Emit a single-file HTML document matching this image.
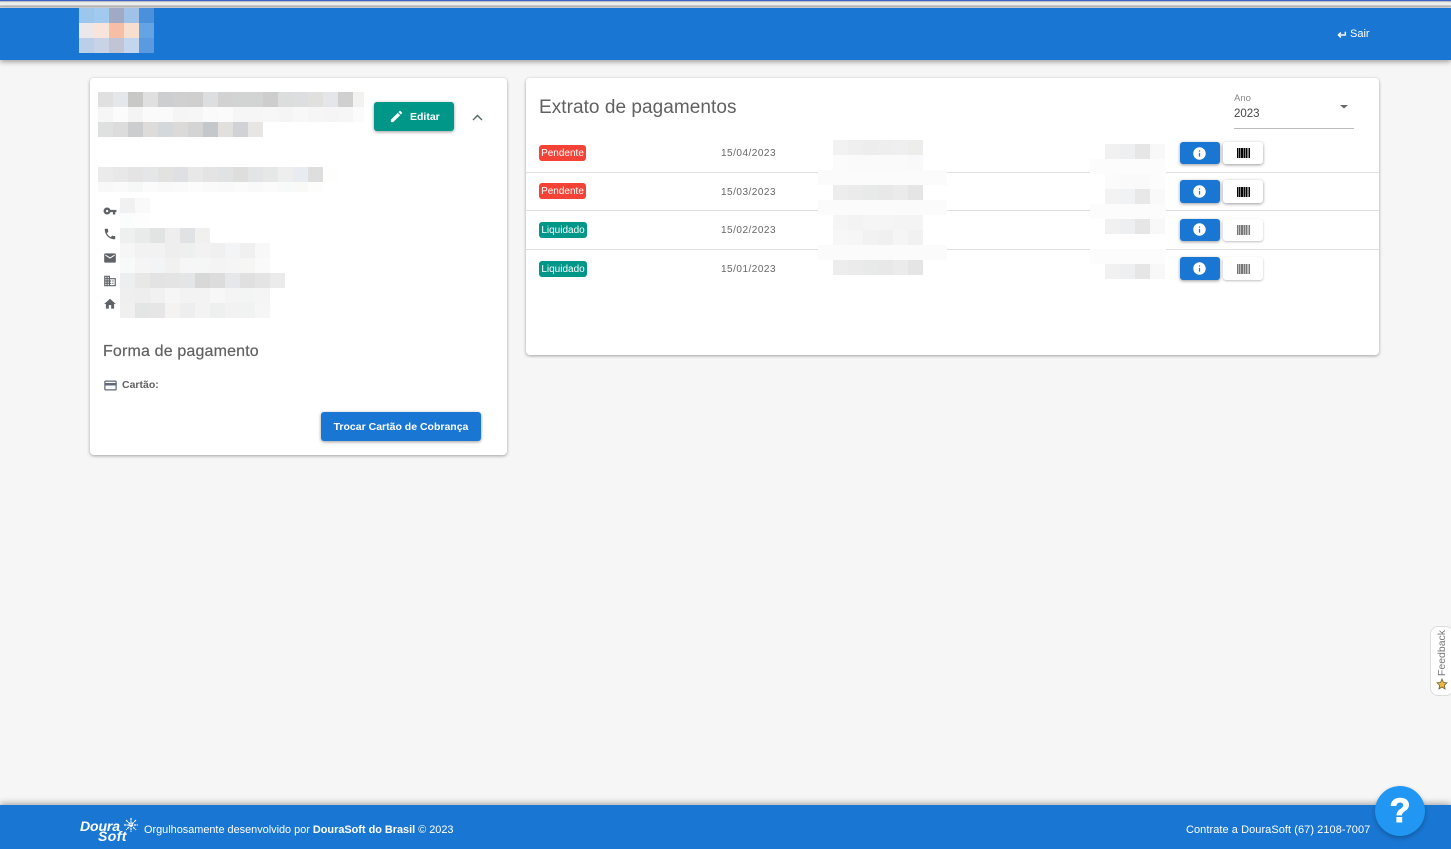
<!DOCTYPE html>
<html lang="pt-BR">
<head>
<meta charset="utf-8">
<title>Extrato de pagamentos</title>
<style>
html,body{margin:0;padding:0;width:1451px;height:849px;overflow:hidden;background:#f6f6f6;font-family:"Liberation Sans",sans-serif;}
.a{position:absolute;white-space:nowrap;}
#strip{left:0;top:0;width:1451px;height:8px;background:linear-gradient(#3a62c4 0,#3a62c4 1px,#a4a8b8 1px,#d8d8d8 2px,#f0f0f0 3px,#eeeeee 5px,#a8a8a8 6px,#c8c8c8 7px,#e4e4e4 8px);}
#head{left:0;top:8px;width:1451px;height:52px;background:#1976d2;box-shadow:0 2px 5px rgba(0,0,0,.35);}
#foot{left:0;top:805px;width:1451px;height:44px;background:#1976d2;box-shadow:0 -2px 6px rgba(0,0,0,.3);}
.card{background:#fff;border-radius:4px;box-shadow:0 1px 3px rgba(0,0,0,.35);}
svg#m{position:absolute;left:0;top:0;width:1451px;height:849px;shape-rendering:crispEdges;pointer-events:none;}
svg#m rect{width:15px;height:15px;}
.btn{border-radius:3px;box-shadow:0 1px 3px rgba(0,0,0,.4);}
.line{left:526px;width:853px;height:1px;background:#e0e0e0;}
.badge{left:539px;height:16px;line-height:18px;border-radius:3px;color:#fff;font-size:10px;text-align:center;}
.date{left:721px;font-size:10px;color:#666;letter-spacing:.5px;line-height:12px;}
.ic{position:absolute;display:block;}
</style>
</head>
<body>
<div class="a" id="strip"></div>
<div class="a" id="head"></div>
<div class="a" id="foot"></div>
<div class="a card" style="left:90px;top:78px;width:417px;height:377px;"></div>
<div class="a card" style="left:526px;top:78px;width:853px;height:277px;"></div>

<div class="a line" style="top:172px;"></div>
<div class="a line" style="top:210px;"></div>
<div class="a line" style="top:249px;"></div>

<svg id="m" viewBox="0 0 1451 849">
<g transform="translate(79,8)">
<rect x="0" y="0" fill="#9cc6ec"/><rect x="15" y="0" fill="#a2caee"/><rect x="30" y="0" fill="#a0aac4"/><rect x="45" y="0" fill="#a0c2e6"/><rect x="60" y="0" fill="#4a90dc"/>
<rect x="0" y="15" fill="#ece8ea"/><rect x="15" y="15" fill="#f8e4da"/><rect x="30" y="15" fill="#f6bea4"/><rect x="45" y="15" fill="#f8dece"/><rect x="60" y="15" fill="#64a4e4"/>
<rect x="0" y="30" fill="#bccfe8"/><rect x="15" y="30" fill="#c8d4e6"/><rect x="30" y="30" fill="#c0c4d4"/><rect x="45" y="30" fill="#c4d6ee"/><rect x="60" y="30" fill="#5a9ae0"/>
</g>
<g transform="translate(98,92)">
<rect x="0" y="0" fill="#e0e0e0"/><rect x="15" y="0" fill="#e4e8ea"/><rect x="30" y="0" fill="#c8c8c6"/><rect x="45" y="0" fill="#e0e0e0"/><rect x="60" y="0" fill="#cdced0"/><rect x="75" y="0" fill="#d0d0d0"/><rect x="90" y="0" fill="#cfcfcf"/><rect x="105" y="0" fill="#dcdee0"/><rect x="120" y="0" fill="#d2d2d2"/><rect x="135" y="0" fill="#d2d3d3"/><rect x="150" y="0" fill="#d2d3d3"/><rect x="165" y="0" fill="#cdcdcd"/><rect x="180" y="0" fill="#dcdedd"/><rect x="195" y="0" fill="#dcdee0"/><rect x="210" y="0" fill="#e0e0de"/><rect x="225" y="0" fill="#e4e6ea"/><rect x="240" y="0" fill="#d0d0d0"/><rect x="255" y="0" fill="#f2f2f0" style="width:11px"/>
<rect x="0" y="15" fill="#f6f6f6"/><rect x="15" y="15" fill="#fbfbfb"/><rect x="30" y="15" fill="#f4f4f4"/><rect x="45" y="15" fill="#fafafa"/><rect x="60" y="15" fill="#fafafa"/><rect x="75" y="15" fill="#f5f5f5"/><rect x="90" y="15" fill="#f6f6f6"/><rect x="105" y="15" fill="#fafafa"/><rect x="120" y="15" fill="#fafbfa"/><rect x="135" y="15" fill="#f6f6f6"/><rect x="150" y="15" fill="#f6f6f6"/><rect x="165" y="15" fill="#f7f7f7"/><rect x="180" y="15" fill="#f5f5f5"/><rect x="195" y="15" fill="#f8f8f8"/><rect x="210" y="15" fill="#f6f6f6"/><rect x="225" y="15" fill="#f5f5f5"/><rect x="240" y="15" fill="#f6f6f6"/><rect x="255" y="15" fill="#fbfbfb" style="width:11px"/>
<rect x="0" y="30" fill="#dfe1e1"/><rect x="15" y="30" fill="#dcdcdc"/><rect x="30" y="30" fill="#cbcdce"/><rect x="45" y="30" fill="#dedcda"/><rect x="60" y="30" fill="#d4d8da"/><rect x="75" y="30" fill="#dcdad8"/><rect x="90" y="30" fill="#d4d4d4"/><rect x="105" y="30" fill="#c4c8ca"/><rect x="120" y="30" fill="#e2e0de"/><rect x="135" y="30" fill="#d0d2d6"/><rect x="150" y="30" fill="#e8e6e4"/>
</g>
<g transform="translate(98,167)">
<rect x="0" y="0" fill="#ebebeb"/><rect x="15" y="0" fill="#e8e8e8"/><rect x="30" y="0" fill="#e4e4e4"/><rect x="45" y="0" fill="#e4e6e8"/><rect x="60" y="0" fill="#e2e2e0"/><rect x="75" y="0" fill="#dfe0e4"/><rect x="90" y="0" fill="#e8e8e8"/><rect x="105" y="0" fill="#e4e4e4"/><rect x="120" y="0" fill="#e0e2e4"/><rect x="135" y="0" fill="#dededc"/><rect x="150" y="0" fill="#e2e4e6"/><rect x="165" y="0" fill="#e6e8e8"/><rect x="180" y="0" fill="#eeeeee"/><rect x="195" y="0" fill="#e8ecf0"/><rect x="210" y="0" fill="#dedede"/><rect x="225" y="0" fill="#fefefc"/>
<rect x="0" y="15" fill="#f8f8f8" style="height:10px"/><rect x="15" y="15" fill="#fafafa" style="height:10px"/><rect x="30" y="15" fill="#f6f8f8" style="height:10px"/><rect x="45" y="15" fill="#fbfbfb" style="height:10px"/><rect x="60" y="15" fill="#f9f9f9" style="height:10px"/><rect x="75" y="15" fill="#fafafa" style="height:10px"/><rect x="90" y="15" fill="#fbfcfb" style="height:10px"/><rect x="105" y="15" fill="#fafafa" style="height:10px"/><rect x="120" y="15" fill="#f9f9f9" style="height:10px"/><rect x="135" y="15" fill="#fbfbfb" style="height:10px"/><rect x="150" y="15" fill="#f9f9f9" style="height:10px"/><rect x="165" y="15" fill="#fbfbfb" style="height:10px"/><rect x="180" y="15" fill="#f8f9f9" style="height:10px"/><rect x="195" y="15" fill="#f9f9f8" style="height:10px"/><rect x="210" y="15" fill="#fdfdfc" style="height:10px"/>
</g>
<g transform="translate(120,198)">
<rect x="0" y="0" fill="#f1f1f1"/><rect x="15" y="0" fill="#f9f9f9"/>
<rect x="0" y="15" fill="#fbfcfc"/><rect x="15" y="15" fill="#fdfdfd"/>
<rect x="0" y="30" fill="#eeefef"/><rect x="15" y="30" fill="#e9eaea"/><rect x="30" y="30" fill="#e2e3e3"/><rect x="45" y="30" fill="#eeeeee"/><rect x="60" y="30" fill="#e1e2e4"/><rect x="75" y="30" fill="#f0f0ee"/>
<rect x="0" y="45" fill="#f6f6f6"/><rect x="15" y="45" fill="#f2f2f2"/><rect x="30" y="45" fill="#f2f2f2"/><rect x="45" y="45" fill="#eeeeee"/><rect x="60" y="45" fill="#eef0f0"/><rect x="75" y="45" fill="#f2f2f2"/><rect x="90" y="45" fill="#f0f0f0"/><rect x="105" y="45" fill="#f3f4f6"/><rect x="120" y="45" fill="#f0f0f0"/><rect x="135" y="45" fill="#f8f8f8"/>
<rect x="0" y="60" fill="#f8f9f9"/><rect x="15" y="60" fill="#f5f5f5"/><rect x="30" y="60" fill="#f2f4f6"/><rect x="45" y="60" fill="#f1f1ef"/><rect x="60" y="60" fill="#f6f6f6"/><rect x="75" y="60" fill="#f5f6f6"/><rect x="90" y="60" fill="#f4f4f4"/><rect x="105" y="60" fill="#f5f5f5"/><rect x="120" y="60" fill="#f6f6f4"/><rect x="135" y="60" fill="#fafafa"/>
<rect x="0" y="75" fill="#eceef0"/><rect x="15" y="75" fill="#e8e8e6"/><rect x="30" y="75" fill="#e3e3e3"/><rect x="45" y="75" fill="#e4e4e4"/><rect x="60" y="75" fill="#e4e5e6"/><rect x="75" y="75" fill="#d8d8d8"/><rect x="90" y="75" fill="#dcdcdc"/><rect x="105" y="75" fill="#e6e7ea"/><rect x="120" y="75" fill="#e0e0e0"/><rect x="135" y="75" fill="#e4e4e4"/><rect x="150" y="75" fill="#ebebeb"/>
<rect x="0" y="90" fill="#efeff0"/><rect x="15" y="90" fill="#eeeeee"/><rect x="30" y="90" fill="#f1f1f1"/><rect x="45" y="90" fill="#f6f6f6"/><rect x="60" y="90" fill="#f3f3f3"/><rect x="75" y="90" fill="#f3f3f3"/><rect x="90" y="90" fill="#f7f7f7"/><rect x="105" y="90" fill="#f4f4f4"/><rect x="120" y="90" fill="#f3f4f4"/><rect x="135" y="90" fill="#f5f5f5"/>
<rect x="0" y="105" fill="#f0f0f0"/><rect x="15" y="105" fill="#e4e5e5"/><rect x="30" y="105" fill="#e6e6e6"/><rect x="45" y="105" fill="#f4f3f1"/><rect x="60" y="105" fill="#eeeeee"/><rect x="75" y="105" fill="#f3f3f3"/><rect x="90" y="105" fill="#eef0f0"/><rect x="105" y="105" fill="#f2f2f2"/><rect x="120" y="105" fill="#f1f2f2"/><rect x="135" y="105" fill="#f6f6f6"/>
</g>
<!-- table col 1 -->
<rect x="818" y="170" fill="#fbfbfb" style="width:129px"/>
<rect x="818" y="200" fill="#fbfbfb" style="width:129px"/>
<rect x="818" y="245" fill="#fbfbfb" style="width:129px"/>
<g transform="translate(833,140)">
<rect x="0" y="0" fill="#f2f2f2"/><rect x="15" y="0" fill="#efefef"/><rect x="30" y="0" fill="#ededed"/><rect x="45" y="0" fill="#eeeeee"/><rect x="60" y="0" fill="#efefef"/><rect x="75" y="0" fill="#ededeb"/>
<rect x="0" y="15" fill="#fbfbfb"/><rect x="15" y="15" fill="#fafafa"/><rect x="30" y="15" fill="#fafafa"/><rect x="45" y="15" fill="#fafafa"/><rect x="60" y="15" fill="#fafafa"/><rect x="75" y="15" fill="#f9f9f9"/>
<rect x="0" y="45" fill="#ededed"/><rect x="15" y="45" fill="#ebebeb"/><rect x="30" y="45" fill="#e8eaea"/><rect x="45" y="45" fill="#e9e8e8"/><rect x="60" y="45" fill="#ebebeb"/><rect x="75" y="45" fill="#e5e5e5"/>
<rect x="0" y="75" fill="#f5f5f5"/><rect x="15" y="75" fill="#f3f3f3"/><rect x="30" y="75" fill="#f5f5f5"/><rect x="45" y="75" fill="#f5f5f5"/><rect x="60" y="75" fill="#f4f4f4"/><rect x="75" y="75" fill="#f4f4f4"/>
<rect x="0" y="90" fill="#f7f7f7"/><rect x="15" y="90" fill="#f6f6f6"/><rect x="30" y="90" fill="#f2f2f2"/><rect x="45" y="90" fill="#f0f0f0"/><rect x="60" y="90" fill="#f5f5f5"/><rect x="75" y="90" fill="#f1f1f1"/>
<rect x="0" y="120" fill="#ededed"/><rect x="15" y="120" fill="#ebebeb"/><rect x="30" y="120" fill="#e8eaea"/><rect x="45" y="120" fill="#e9e8e8"/><rect x="60" y="120" fill="#ebebeb"/><rect x="75" y="120" fill="#e5e5e5"/>
</g>
<!-- table col 2 -->
<rect x="1090" y="159" fill="#fcfcfc" style="width:76px"/>
<rect x="1090" y="204" fill="#fcfcfc" style="width:76px"/>
<rect x="1090" y="249" fill="#fcfcfc" style="width:76px"/>
<g transform="translate(1105,144)">
<rect x="0" y="0" fill="#f1f1f1"/><rect x="15" y="0" fill="#eeeff0"/><rect x="30" y="0" fill="#e6e6e6"/><rect x="45" y="0" fill="#f8f8f8"/>
<rect x="0" y="30" fill="#fbfbfb"/><rect x="15" y="30" fill="#fafafa"/><rect x="30" y="30" fill="#fafafa"/><rect x="45" y="30" fill="#fcfcfc"/>
<rect x="0" y="45" fill="#f3f3f3"/><rect x="15" y="45" fill="#f1f2f3"/><rect x="30" y="45" fill="#e8e8e8"/><rect x="45" y="45" fill="#f9f9f9"/>
<rect x="0" y="75" fill="#f1f1f1"/><rect x="15" y="75" fill="#eeeff0"/><rect x="30" y="75" fill="#e6e6e6"/><rect x="45" y="75" fill="#f8f8f8"/>
<rect x="0" y="120" fill="#f1f1f1"/><rect x="15" y="120" fill="#eeeff0"/><rect x="30" y="120" fill="#e6e6e6"/><rect x="45" y="120" fill="#f8f8f8"/>
</g>
</svg>

<!-- Header right -->
<svg class="ic" style="left:1337px;top:30px" width="10" height="10" viewBox="0 0 24 24"><path fill="#fff" stroke="#fff" stroke-width="1.500" d="M19 5v6H5.830l3.580-3.590L8 6l-6 6 6 6 1.410-1.410L5.830 13H21V5z"/></svg>
<div class="a" style="left:1350px;top:28px;font-size:11px;line-height:13px;color:#fff;">Sair</div>

<!-- Edit -->
<div class="a btn" style="left:374px;top:102px;width:80px;height:29px;background:#009688;"></div>
<svg class="ic" style="left:389px;top:109px" width="15" height="15" viewBox="0 0 24 24"><path fill="#fff" d="M3 17.25V21h3.75L17.81 9.94l-3.75-3.75L3 17.25zM20.71 7.04c.39-.39.39-1.02 0-1.41l-2.34-2.34c-.39-.39-1.02-.39-1.41 0l-1.83 1.83 3.75 3.75 1.83-1.83z"/></svg>
<div class="a" style="left:410px;top:110px;font-size:10.500px;line-height:14px;font-weight:bold;color:#fff;">Editar</div>
<svg class="ic" style="left:470px;top:110px" width="15" height="14" viewBox="0 0 15 14"><path fill="none" stroke="#566" stroke-width="1.400" d="M3 10l4.500-4.500L12 10"/></svg>

<!-- Contact icons -->
<svg class="ic" style="left:103px;top:204px" width="14" height="14" viewBox="0 0 24 24"><path fill="#5f6368" d="M12.65 10C11.83 7.670 9.610 6 7 6c-3.310 0-6 2.690-6 6s2.690 6 6 6c2.610 0 4.830-1.670 5.650-4H17v4h4v-4h2v-4H12.650zM7 14c-1.100 0-2-.9-2-2s.9-2 2-2 2 .9 2 2-.9 2-2 2z"/></svg>
<svg class="ic" style="left:103px;top:227px" width="14" height="14" viewBox="0 0 24 24"><path fill="#5f6368" d="M6.620 10.790c1.440 2.830 3.760 5.140 6.590 6.590l2.200-2.200c.27-.27.67-.36 1.020-.24 1.120.37 2.330.57 3.570.57.55 0 1 .45 1 1V20c0 .55-.45 1-1 1-9.390 0-17-7.610-17-17 0-.55.45-1 1-1h3.500c.55 0 1 .45 1 1 0 1.250.2 2.450.57 3.570.11.35.03.74-.25 1.020l-2.200 2.200z"/></svg>
<svg class="ic" style="left:103px;top:251px" width="14" height="14" viewBox="0 0 24 24"><path fill="#5f6368" d="M20 4H4c-1.100 0-1.990.9-1.990 2L2 18c0 1.100.9 2 2 2h16c1.100 0 2-.9 2-2V6c0-1.100-.9-2-2-2zm0 4l-8 5-8-5V6l8 5 8-5v2z"/></svg>
<svg class="ic" style="left:103px;top:274px" width="14" height="14" viewBox="0 0 24 24"><path fill="#5f6368" d="M12 7V3H2v18h20V7H12zM6 19H4v-2h2v2zm0-4H4v-2h2v2zm0-4H4V9h2v2zm0-4H4V5h2v2zm4 12H8v-2h2v2zm0-4H8v-2h2v2zm0-4H8V9h2v2zm0-4H8V5h2v2zm10 12h-8v-2h2v-2h-2v-2h2v-2h-2V9h8v10zm-2-8h-2v2h2v-2zm0 4h-2v2h2v-2z"/></svg>
<svg class="ic" style="left:103px;top:297px" width="14" height="14" viewBox="0 0 24 24"><path fill="#5f6368" d="M10 20v-6h4v6h5v-8h3L12 3 2 12h3v8z"/></svg>

<div class="a" style="left:103px;top:342px;font-size:16px;line-height:19px;color:#616161;letter-spacing:.16px;-webkit-text-stroke:.2px #616161;">Forma de pagamento</div>
<svg class="ic" style="left:103px;top:378px" width="15" height="15" viewBox="0 0 24 24"><path fill="#5f6b7a" d="M20 4H4c-1.110 0-1.990.89-1.990 2L2 18c0 1.110.89 2 2 2h16c1.110 0 2-.89 2-2V6c0-1.110-.89-2-2-2zm0 14H4v-6h16v6zm0-10H4V6h16v2z"/></svg>
<div class="a" style="left:122px;top:379px;font-size:10.500px;line-height:13px;font-weight:bold;color:#616161;">Cartão:</div>
<div class="a btn" style="left:321px;top:412px;width:160px;height:29px;line-height:30px;background:#1976d2;color:#fff;font-size:10.500px;font-weight:bold;text-align:center;">Trocar Cartão de Cobrança</div>

<!-- Statement -->
<div class="a" style="left:539px;top:96px;font-size:19px;line-height:24px;color:#616161;letter-spacing:.05px;">Extrato de pagamentos</div>
<div class="a" style="left:1234px;top:93px;font-size:9.500px;line-height:12px;color:#888;">Ano</div>
<div class="a" style="left:1234px;top:107px;font-size:11.500px;line-height:14px;color:#444;">2023</div>
<div class="a" style="left:1234px;top:128px;width:120px;height:1px;background:#bbb;"></div>
<svg class="ic" style="left:1339px;top:104px" width="10" height="5" viewBox="0 0 10 5"><path fill="#666" d="M1 1h8L5 4.500z"/></svg>

<div class="a badge" style="top:145px;width:47px;background:#f44336;">Pendente</div>
<div class="a badge" style="top:183px;width:47px;background:#f44336;">Pendente</div>
<div class="a badge" style="top:222px;width:48px;background:#009688;">Liquidado</div>
<div class="a badge" style="top:261px;width:48px;background:#009688;">Liquidado</div>

<div class="a date" style="top:148px;">15/04/2023</div>
<div class="a date" style="top:187px;">15/03/2023</div>
<div class="a date" style="top:225px;">15/02/2023</div>
<div class="a date" style="top:264px;">15/01/2023</div>

<div class="a btn" style="left:1180px;top:142px;width:40px;height:22px;background:#1976d2;"></div>
<div class="a btn" style="left:1180px;top:180px;width:40px;height:23px;background:#1976d2;"></div>
<div class="a btn" style="left:1180px;top:219px;width:40px;height:22px;background:#1976d2;"></div>
<div class="a btn" style="left:1180px;top:257px;width:40px;height:23px;background:#1976d2;"></div>
<svg class="ic" style="left:1192px;top:146px" width="15" height="15" viewBox="0 0 24 24"><path fill="#fff" d="M12 2C6.480 2 2 6.480 2 12s4.480 10 10 10 10-4.480 10-10S17.520 2 12 2zm1 15h-2v-6h2v6zm0-8h-2V7h2v2z"/></svg>
<svg class="ic" style="left:1192px;top:184px" width="15" height="15" viewBox="0 0 24 24"><path fill="#fff" d="M12 2C6.480 2 2 6.480 2 12s4.480 10 10 10 10-4.480 10-10S17.520 2 12 2zm1 15h-2v-6h2v6zm0-8h-2V7h2v2z"/></svg>
<svg class="ic" style="left:1192px;top:222px" width="15" height="15" viewBox="0 0 24 24"><path fill="#fff" d="M12 2C6.480 2 2 6.480 2 12s4.480 10 10 10 10-4.480 10-10S17.520 2 12 2zm1 15h-2v-6h2v6zm0-8h-2V7h2v2z"/></svg>
<svg class="ic" style="left:1192px;top:261px" width="15" height="15" viewBox="0 0 24 24"><path fill="#fff" d="M12 2C6.480 2 2 6.480 2 12s4.480 10 10 10 10-4.480 10-10S17.520 2 12 2zm1 15h-2v-6h2v6zm0-8h-2V7h2v2z"/></svg>

<div class="a btn" style="left:1223px;top:142px;width:40px;height:22px;background:#fff;"></div>
<div class="a btn" style="left:1223px;top:180px;width:40px;height:23px;background:#fff;"></div>
<div class="a btn" style="left:1223px;top:219px;width:40px;height:22px;background:#fff;box-shadow:0 1px 2px rgba(0,0,0,.25);"></div>
<div class="a btn" style="left:1223px;top:257px;width:40px;height:23px;background:#fff;box-shadow:0 1px 2px rgba(0,0,0,.25);"></div>
<svg class="ic" style="left:1237px;top:148px" width="13" height="10" viewBox="0 0 13 10"><path fill="#000" d="M0 0h1.500v10H0zM2 0h1.500v10H2zM4 0h2v10H4zM6.500 0h1.500v10H6.500zM8.500 0h1.500v10H8.500zM10.500 0h1v10h-1zM12 0h1v10h-1z"/></svg>
<svg class="ic" style="left:1237px;top:187px" width="13" height="10" viewBox="0 0 13 10"><path fill="#000" d="M0 0h1.500v10H0zM2 0h1.500v10H2zM4 0h2v10H4zM6.500 0h1.500v10H6.500zM8.500 0h1.500v10H8.500zM10.500 0h1v10h-1zM12 0h1v10h-1z"/></svg>
<svg class="ic" style="left:1237px;top:225px" width="13" height="10" viewBox="0 0 13 10"><path fill="#777" d="M0 0h1.500v10H0zM2 0h1.500v10H2zM4 0h2v10H4zM6.500 0h1.500v10H6.500zM8.500 0h1.500v10H8.500zM10.500 0h1v10h-1zM12 0h1v10h-1z"/></svg>
<svg class="ic" style="left:1237px;top:264px" width="13" height="10" viewBox="0 0 13 10"><path fill="#777" d="M0 0h1.500v10H0zM2 0h1.500v10H2zM4 0h2v10H4zM6.500 0h1.500v10H6.500zM8.500 0h1.500v10H8.500zM10.500 0h1v10h-1zM12 0h1v10h-1z"/></svg>

<!-- Feedback -->
<div class="a" style="left:1430px;top:626px;width:24px;height:70px;background:#fff;border:1px solid #ddd;border-radius:8px;box-sizing:border-box;"></div>
<div class="a" style="left:1441.500px;top:653px;width:0;height:0;">
<div style="position:absolute;left:-30px;top:-7px;width:60px;height:14px;line-height:14px;text-align:center;transform:rotate(-90deg);font-size:10.500px;color:#777;">Feedback</div>
</div>
<svg class="ic" style="left:1436px;top:678px" width="12" height="12" viewBox="0 0 24 24"><path fill="#f0b83a" stroke="#6a5a3a" stroke-width="1.500" d="M12 2l3 7 7 .7-5.300 4.800L18.200 22 12 18l-6.200 4 1.500-7.500L2 9.700 9 9z"/></svg>

<!-- Footer -->
<div class="a" style="left:80px;top:819px;font-size:14px;line-height:14px;font-style:italic;font-weight:bold;color:#fff;letter-spacing:-.1px;">Doura</div>
<div class="a" style="left:98px;top:829px;font-size:14px;line-height:14px;font-style:italic;font-weight:bold;color:#fff;letter-spacing:.4px;">Soft</div>
<svg class="ic" style="left:124px;top:818px" width="14" height="14" viewBox="0 0 14 14"><path fill="none" stroke="#fff" stroke-width="1.200" stroke-dasharray="2.500 .8" d="M7 0v14M0 7h14M2 2l10 10M12 2L2 12"/></svg>
<div class="a" style="left:144px;top:823px;font-size:10.900px;line-height:14px;color:#fff;">Orgulhosamente desenvolvido por <b>DouraSoft do Brasil</b> © 2023</div>
<div class="a" style="left:1186px;top:823px;font-size:11px;line-height:14px;color:#fff;letter-spacing:.06px;">Contrate a DouraSoft (67) 2108-7007</div>
<div class="a" style="left:1375px;top:786px;width:50px;height:50px;border-radius:50%;background:#2196f3;box-shadow:0 2px 5px rgba(0,0,0,.25);color:#fff;font-size:34px;font-weight:bold;line-height:50px;text-align:center;-webkit-text-stroke:1px #fff;">?</div>
</body>
</html>
